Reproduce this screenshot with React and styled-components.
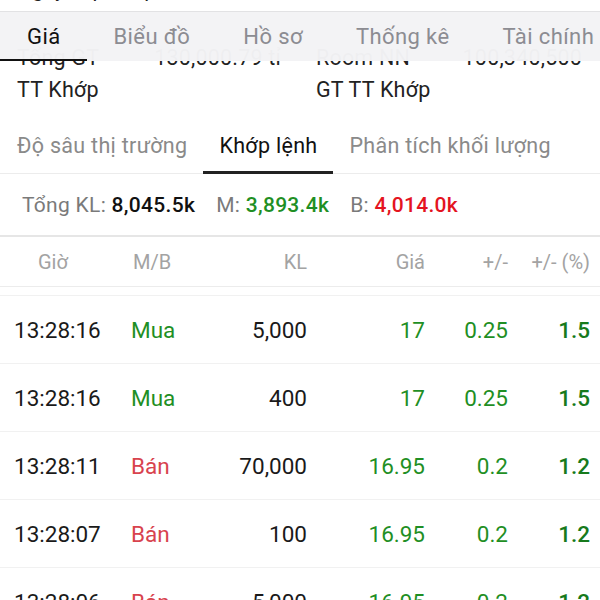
import React from "react";
import styled, {createGlobalStyle} from "styled-components";

const GlobalStyle = createGlobalStyle`
 html, body {
  margin: 0;
  padding: 0;
  background: #fff;
 }
 body {
  font-family: Roboto, "Noto Sans", "Liberation Sans", sans-serif;
  color: #1a1a1a;
 }
`;

const GREEN = "#1f8f24";
const RED = "#e4141f";
const SOFT_RED = "#d8434e";

const Page = styled.div`
 position: relative;
 width: 600px;
 height: 600px;
 overflow: hidden;
 background: #fff;
`;

const PeekLine = styled.div`
 height: 11px;
 overflow: hidden;
 padding-left: 17px;
 font-size: 21px;
 color: #222;
 & > span {
  display: block;
  line-height: 21px;
  margin-top: -20px;
 }
`;

// sticky top tabs, they float over the scrolled info block
const TopTabs = styled.div`
 position: absolute;
 top: 11px;
 left: 0;
 right: 0;
 height: 50px;
 display: flex;
 background: rgba(243, 243, 245, 0.98);
 border-top: 1px solid #e2e2e4;
 box-sizing: border-box;
`;

const TopTab = styled.div`
 position: relative;
 padding: 0 26.5px;
 display: flex;
 align-items: center;
 font-size: 22px;
 letter-spacing: 0.4px;
 white-space: nowrap;
 color: ${({active}) => (active ? "#111" : "#8c8c92")};
 &:first-child {
  padding-left: 27px;
 }
 &::after {
  content: "";
  display: ${({active}) => (active ? "block" : "none")};
  position: absolute;
  left: 0;
  right: 0;
  bottom: 0;
  height: 2px;
  background: #111;
 }
`;

const InfoBlock = styled.div`
 margin-top: 31px;
`;

const InfoRow = styled.div`
 display: grid;
 grid-template-columns: 136px 128px 1fr 125px;
 padding: 0 18px 0 17px;
 font-size: 21.5px;
 letter-spacing: 0.2px;
 line-height: 32px;
 color: #222;
 white-space: nowrap;
`;

const InfoLabel = styled.span`
 padding-left: ${({pad}) => pad || 0}px;
`;

const InfoValue = styled.span`
 text-align: right;
`;

const SubTabs = styled.div`
 display: flex;
 margin-top: 11px;
 border-bottom: 1px solid #ececec;
`;

const SubTab = styled.div`
 position: relative;
 padding: 0 16px;
 height: 56px;
 display: flex;
 align-items: center;
 font-size: 21.5px;
 letter-spacing: 0.3px;
 white-space: nowrap;
 color: ${({active}) => (active ? "#111" : "#8a8a8a")};
 &:first-child {
  padding-left: 17px;
 }
 &::after {
  content: "";
  display: ${({active}) => (active ? "block" : "none")};
  position: absolute;
  left: 0;
  right: 0;
  bottom: -1px;
  height: 3px;
  background: #222;
 }
`;

const Summary = styled.div`
 display: flex;
 gap: 21px;
 align-items: center;
 height: 61px;
 padding-left: 22px;
 font-size: 21px;
 letter-spacing: 0.3px;
 border-bottom: 2px solid #e6e6e6;
`;

const SumItem = styled.span`
 color: #7a7a7a;
 & b {
  font-weight: 500;
  color: ${({tone}) => tone || "#111"};
 }
`;

const Grid = styled.div`
 display: grid;
 grid-template-columns: 117px 70px 106px 118px 83px 82px;
 align-items: center;
 padding: 0 10px 0 14px;
 height: ${({head}) => (head ? "50px" : "68px")};
 border-bottom: 1px solid ${({head}) => (head ? "#ececec" : "#f1f1f1")};
 box-sizing: border-box;
 white-space: nowrap;
`;

const HeadCell = styled.div`
 font-size: 20px;
 color: #a3a3a3;
 text-align: ${({align}) => align || "right"};
 padding-left: ${({pad}) => pad || 0}px;
`;

const Cell = styled.div`
 font-size: 22.5px;
 color: ${({tone}) => tone || "#1a1a1a"};
 font-weight: ${({strong}) => (strong ? 500 : 400)};
 text-align: ${({align}) => align || "right"};
`;

const Gap = styled.div`
 height: 8px;
 border-bottom: 1px solid #f1f1f1;
`;

const trades = [
 {time: "13:28:16", side: "Mua", kl: "5,000", price: "17", diff: "0.25", pct: "1.5"},
 {time: "13:28:16", side: "Mua", kl: "400", price: "17", diff: "0.25", pct: "1.5"},
 {time: "13:28:11", side: "Bán", kl: "70,000", price: "16.95", diff: "0.2", pct: "1.2"},
 {time: "13:28:07", side: "Bán", kl: "100", price: "16.95", diff: "0.2", pct: "1.2"},
 {time: "13:28:06", side: "Bán", kl: "5,000", price: "16.95", diff: "0.2", pct: "1.2"},
];

const topTabs = ["Giá", "Biểu đồ", "Hồ sơ", "Thống kê", "Tài chính"];
const subTabs = ["Độ sâu thị trường", "Khớp lệnh", "Phân tích khối lượng"];

const App = () => {
 return (
  <Page>
   <GlobalStyle />
   <PeekLine>
    <span>Ngày cập nhập: 13:28</span>
   </PeekLine>

   <TopTabs>
    {topTabs.map((t, i) => (
     <TopTab key={t} active={i === 0}>
      {t}
     </TopTab>
    ))}
   </TopTabs>

   <InfoBlock>
    <InfoRow>
     <InfoLabel>Tổng GT</InfoLabel>
     <InfoValue>130,000.79 tỉ</InfoValue>
     <InfoLabel pad={35}>Room NN</InfoLabel>
     <InfoValue>100,340,500</InfoValue>
    </InfoRow>
    <InfoRow>
     <InfoLabel>TT Khớp</InfoLabel>
     <InfoValue />
     <InfoLabel pad={35}>GT TT Khớp</InfoLabel>
     <InfoValue />
    </InfoRow>
   </InfoBlock>

   <SubTabs>
    {subTabs.map((t, i) => (
     <SubTab key={t} active={i === 1}>
      {t}
     </SubTab>
    ))}
   </SubTabs>

   <Summary>
    <SumItem>
     Tổng KL: <b>8,045.5k</b>
    </SumItem>
    <SumItem tone={GREEN}>
     M: <b>3,893.4k</b>
    </SumItem>
    <SumItem tone={RED}>
     B: <b>4,014.0k</b>
    </SumItem>
   </Summary>

   <Grid head>
    <HeadCell align='left' pad={24}>
     Giờ
    </HeadCell>
    <HeadCell align='left' pad={2}>
     M/B
    </HeadCell>
    <HeadCell>KL</HeadCell>
    <HeadCell>Giá</HeadCell>
    <HeadCell>+/-</HeadCell>
    <HeadCell>+/- (%)</HeadCell>
   </Grid>
   <Gap />

   {trades.map((r, i) => (
    <Grid key={i}>
     <Cell align='left'>{r.time}</Cell>
     <Cell align='left' tone={r.side === "Mua" ? GREEN : SOFT_RED}>
      {r.side}
     </Cell>
     <Cell>{r.kl}</Cell>
     <Cell tone={GREEN}>{r.price}</Cell>
     <Cell tone={GREEN}>{r.diff}</Cell>
     <Cell tone='#177a1c' strong>
      {r.pct}
     </Cell>
    </Grid>
   ))}
  </Page>
 );
};

export default App;
